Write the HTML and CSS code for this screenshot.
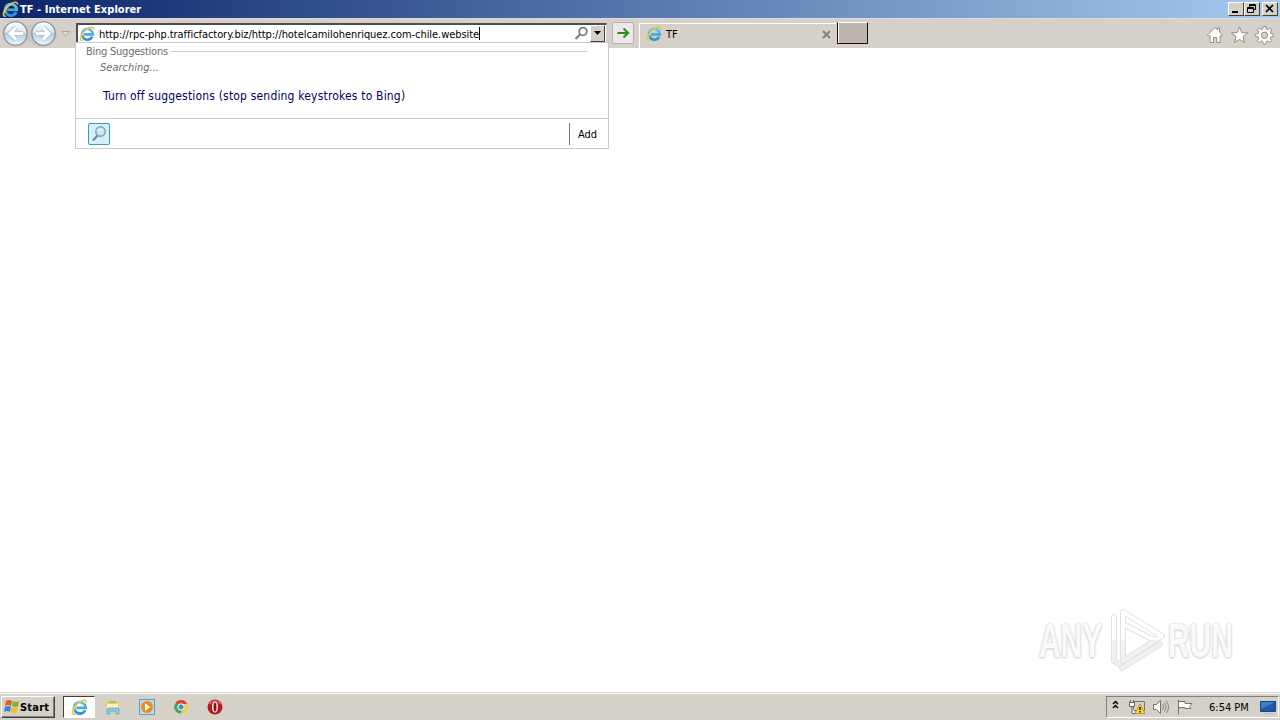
FILE: index.html
```html
<!DOCTYPE html>
<html lang="en">
<head>
  <meta charset="UTF-8" />
  <title>TF - Internet Explorer</title>
  <link rel="stylesheet" href="styles.css">
</head>
<body>

  <!-- shared icons -->
  <svg class="defs" width="0" height="0">
    <defs>
      <linearGradient id="blue" x1="0" y1="0" x2="0" y2="1">
        <stop offset="0" stop-color="#66c4f0" />
        <stop offset="1" stop-color="#2c90d5" />
      </linearGradient>
      <linearGradient id="glass" x1="0" y1="0" x2="0" y2="1">
        <stop offset="0" stop-color="#fafcfd" />
        <stop offset=".45" stop-color="#dce7ef" />
        <stop offset=".5" stop-color="#b4ccdd" />
        <stop offset="1" stop-color="#e6fbff" />
      </linearGradient>
      <linearGradient id="mark" x1="0" y1="0" x2="0" y2="1">
        <stop offset=".49" stop-color="#fff" />
        <stop offset=".51" stop-color="#f1f1f1" />
      </linearGradient>
      <symbol id="ie" viewBox="0 0 16 16">
        <path d="M13.300 10.600A5.400 5.400 0 1 1 13.800 8.300H5" fill="none" stroke="url(#blue)" stroke-width="2.700" />
        <path d="M3.600 14.300C-.4 15 .8 8.600 6.300 4.200c4.100-3.300 8.700-4.300 8.300-.7" fill="none" stroke="#e8c431" stroke-width="1.400" />
        <path d="M1.900 12.500C2 10 5 6 8.500 3.600" fill="none" stroke="#fff08a" stroke-width=".6" />
      </symbol>
    </defs>
  </svg>

  <header class="titlebar">
    <svg class="title-icon" width="17" height="17"><use href="#ie" /></svg>
    <span class="title-text">TF - Internet Explorer</span>
    <div class="window-buttons">
      <span class="win-btn"><svg width="14" height="12"><path d="M3 9h6" stroke="#000" stroke-width="2" /></svg></span>
      <span class="win-btn"><svg width="14" height="12"><path d="M4.500 4V1.500h6v5H9M4 2.500h7M2.500 4.500h6v5h-6zM2 5.500h7" fill="none" stroke="#000" /></svg></span>
      <span class="win-btn close"><svg width="14" height="12"><path d="M3 2l7 7M10 2L3 9" stroke="#000" stroke-width="1.7" /></svg></span>
    </div>
  </header>

  <nav class="toolbar">
    <svg class="history" width="74" height="30" viewBox="0 0 74 30">
      <path d="M2 14C3 1 19-1 25 5q4 3 8 0C41-1 56 2 57 15c0 14-17 16-25 9q-3-2-6 0C18 31 2 28 2 14z" fill="#c9c6c3" />
      <g fill="url(#glass)" stroke="#83888e" stroke-width="1.1">
        <circle cx="15.5" cy="14.5" r="11.7" />
        <circle cx="43.5" cy="14.5" r="11.7" />
      </g>
      <g fill="none" stroke="#8cabc1" stroke-width="4.6"><path d="M23 14.500H10M16 8.500l-6 6 6 6M36 14.500h13M43 8.500l6 6-6 6" /></g>
      <g fill="none" stroke="#fff" stroke-width="3.4"><path d="M23 14.500H10M16 8.500l-6 6 6 6M36 14.500h13M43 8.500l6 6-6 6" /></g>
      <path d="M61.5 12.500h8l-4 4.500z" fill="#e1ded9" stroke="#aaa6a0" />
    </svg>

    <div class="address">
      <svg class="address-icon" width="16" height="16"><use href="#ie" /></svg>
      <span class="url">http://rpc-php.trafficfactory.biz/http://hotelcamilohenriquez.com-chile.website</span>
      <span class="caret"></span>
      <svg class="find" width="15" height="15"><circle cx="9" cy="5.5" r="3.8" fill="none" stroke="#7b7b7b" stroke-width="1.8" /><path d="M6 8.5L1.5 13" stroke="#7b7b7b" stroke-width="2.2" /></svg>
      <span class="drop"><svg width="13" height="14"><path d="M3 5h7L6.500 9z" /></svg></span>
    </div>

    <span class="go"><svg width="20" height="20"><path d="M4.500 10h10M10.500 5.500l4.500 4.500-4.500 4.500" fill="none" stroke="#278b23" stroke-width="2.1" /></svg></span>

    <div class="tab">
      <svg width="16" height="16"><use href="#ie" /></svg>
      <span class="tab-name">TF</span>
      <svg class="tab-close" width="9" height="9"><path d="M1 1l7 7M8 1L1 8" stroke="#84807a" stroke-width="1.9" /></svg>
    </div>
    <span class="new-tab"></span>

    <svg class="tools" width="68" height="20" viewBox="0 0 68 20">
      <g fill="#fff" stroke="#8e8b87" stroke-width="1" stroke-linejoin="round">
        <path d="M1.500 10L9 2.500l2.500 2.300V3h2v4L16.500 10l-1.400 1.400-.9-.8V17.500h-3.500v-5H7.500v5H4v-7l-1 1z" />
        <path d="M33.500 2l2.200 5.600 6 .3-4.700 3.800 1.600 5.900-5.100-3.300-5.100 3.300 1.600-5.900-4.700-3.800 6-.3z" />
        <path d="M56.700 4l.5-2.500h2.600l.5 2.500 1.400.6 2.100-1.500 1.900 1.900-1.500 2.100.6 1.400 2.500.5v2.600l-2.500.5-.6 1.400 1.500 2.100-1.900 1.900-2.100-1.500-1.400.6-.5 2.500h-2.600l-.5-2.500-1.400-.6-2.100 1.500-1.900-1.900 1.500-2.100-.6-1.400-2.500-.5V9l2.500-.5.6-1.400L51.300 5l1.900-1.900 2.100 1.500z" />
        <circle cx="58.500" cy="10.300" r="3.200" fill="#d5d1cb" />
      </g>
    </svg>
  </nav>

  <main class="page">
    <!-- watermark -->
    <div class="watermark">
      <span class="mark-text">ANY</span>
      <svg width="62" height="66" viewBox="0 0 62 66">
        <g fill="none" stroke-linejoin="round" stroke-linecap="round">
          <path class="mark-shade" d="M9 10v44l5 3M18 54V5l39 24-39 25M18 17l31 16M17 61l38-24" />
          <path class="mark-line" d="M9 10v44l5 3M18 54V5l39 24-39 25M18 17l31 16M17 61l38-24" />
        </g>
      </svg>
      <span class="mark-text run">RUN</span>
    </div>
  </main>

  <!-- address bar suggestions -->
  <section class="suggestions">
    <div class="group"><span>Bing Suggestions</span></div>
    <div class="searching">Searching...</div>
    <div class="turn-off">Turn off suggestions (stop sending keystrokes to Bing)</div>
    <div class="providers">
      <span class="provider"><svg width="20" height="20"><path d="M8.500 11.500L4 16.500" stroke="#7d858d" stroke-width="2" /><circle cx="11.500" cy="7.500" r="4.700" fill="#c4e7fa" stroke="#8799ab" stroke-width="1.400" /><path d="M9 7q1-3 4-2" fill="none" stroke="#fff" /></svg></span>
      <span class="add">Add</span>
    </div>
  </section>

  <footer class="taskbar">
    <div class="start">
      <svg width="17" height="16" viewBox="0 0 17 16">
        <path d="M3 2q3-2 6 0L8 7Q5 5 2 7z" fill="#e9572b" />
        <path d="M10 2q3 2 6 0l-1 5q-3 2-6 0z" fill="#79b72c" />
        <path d="M2 8q3-2 6 0l-1 5q-3-2-6 0z" fill="#3984cf" />
        <path d="M9 8q3 2 6 0l-1 5q-3 2-6 0z" fill="#f7bd23" />
      </svg>
      <span>Start</span>
    </div>
    <div class="task active"><svg width="17" height="17"><use href="#ie" /></svg></div>
    <div class="task">
      <svg width="16" height="16"><path d="M1 2h5l1 1h7v11H1z" fill="#ebcf6b" /><path d="M2 5h11v4H2z" fill="#fff4b9" /><path d="M4 3h7" stroke="#63ad58" /><path d="M2 15v-4q0-2 2-2h8q2 0 2 2v4h-3v-3H5v3z" fill="#8bcdf0" stroke="#4b9dcb" stroke-width=".7" /></svg>
    </div>
    <div class="task">
      <svg width="17" height="17"><path d="M.5.5h15v15H.5z" fill="#b9dbf0" stroke="#5998cb" /><circle cx="8" cy="8" r="6" fill="#f18a17" /><path d="M6 4.300L11.500 8 6 11.700z" fill="#fff" /></svg>
    </div>
    <div class="task">
      <svg width="16" height="16"><path d="M8 8L2.400 4.300A6.500 6.500 0 0 1 14 5H8z" fill="#da4437" /><path d="M8 8L2.400 4.300A6.500 6.500 0 0 0 7.500 14.500l3-5z" fill="#42a55a" /><path d="M8 5h6a6.500 6.500 0 0 1-6.500 9.500L11 8z" fill="#f5ce3e" /><circle cx="8" cy="8" r="3.200" fill="#4c87df" stroke="#fff" stroke-width="1" /></svg>
    </div>
    <div class="task">
      <svg width="16" height="16"><circle cx="8" cy="8" r="7.500" fill="#b9181d" /><path d="M2 5q6-6 12 0" fill="none" stroke="#df6761" stroke-width="1.500" /><ellipse cx="8" cy="8" rx="3" ry="5.500" fill="#fff" /><ellipse cx="8" cy="8" rx="1.500" ry="4.600" fill="#8c1114" /></svg>
    </div>
    <div class="tray">
      <svg width="92" height="18" viewBox="0 0 92 18">
        <path d="M6 6l2.500-2.500L11 6M6 10l2.500-2.500L11 10" fill="none" stroke="#000" stroke-width="1.500" />
        <path d="M26.500 3.500h11v9h-11z" fill="#d5d2cd" stroke="#77736f" />
        <path d="M22.500 4.500h5v4h-5zM23.500 2v2.500M26.500 2v2.500M25 8.500v7h3" fill="#fff" stroke="#65625f" />
        <path d="M33 6l5 9.500H28z" fill="#ffd82e" stroke="#b99a20" /><path d="M33 9v3M33 13v1.500" stroke="#000" stroke-width="1.300" />
        <path d="M46.500 6.500h3l4-4v13l-4-4h-3z" fill="#fff" stroke="#74716e" />
        <path d="M55.500 6q2 3 0 6M57.500 4.500q3 4.500 0 9M59.500 3q4 6 0 12" fill="none" stroke="#8b8885" />
        <path d="M71.500 2v14M72 3.500h6v2h7l-2.500 3 1.500 2h-6v-1h-6" fill="#fff" stroke="#74716e" />
      </svg>
      <span class="clock">6:54 PM</span>
      <svg class="desktop" width="16" height="16"><path d="M.5 1.500h15v10H.5z" fill="#215aa4" stroke="#164784" /><path d="M1 2h14L1 9z" fill="#3c7fce" /><path d="M4 13.500h9" stroke="#abc0d2" /></svg>
    </div>
  </footer>

</body>
</html>
```
FILE: styles.css
```css
* {
  box-sizing: border-box;
}

body {
  margin: 0;
  width: 1280px;
  height: 720px;
  display: flex;
  flex-direction: column;
  position: relative;
  overflow: hidden;
  background: #fff;
  color: #000;
  font-family: "DejaVu Sans Condensed", "DejaVu Sans", sans-serif;
  font-size: 11px;
}

svg {
  display: block;
  flex: none;
}

.defs {
  position: absolute;
}

/* title bar */
.titlebar {
  height: 18px;
  display: flex;
  align-items: center;
  padding: 0 2px;
  background: linear-gradient(90deg, #0a246a, #a6caf0);
}

.title-text {
  margin-left: 1px;
  color: #fff;
  font-weight: bold;
  letter-spacing: 0.04px;
  white-space: nowrap;
}

.window-buttons {
  display: flex;
  margin-left: auto;
}

.win-btn {
  width: 16px;
  height: 14px;
  background: #d4d0c8;
  border: 1px solid;
  border-color: #fff #404040 #404040 #fff;
}

.close {
  margin-left: 2px;
}

/* toolbar */
.toolbar {
  height: 30px;
  display: flex;
  align-items: flex-start;
  background: #d5d0c8;
  border-top: 1px solid #dedbd6;
}

.address {
  display: flex;
  align-items: center;
  width: 531px;
  height: 20px;
  margin: 4px 0 0 2px;
  padding: 0 1px 0 1px;
  background: #fff;
  border: 1px solid #d4d0c8;
  border-top: 2px solid #514b51;
  border-left: 2px solid #514b51;
}

.url {
  margin: 1px 0 0 4px;
  letter-spacing: -0.06px;
  white-space: nowrap;
}

.caret {
  width: 1px;
  height: 13px;
  background: #000;
}

.find {
  margin-left: auto;
}

.drop {
  width: 15px;
  height: 17px;
  margin-left: 1px;
  background: #d4d0c8;
  border: 1px solid;
  border-color: #fff #404040 #404040 #fff;
}

.go {
  width: 22px;
  height: 22px;
  margin: 3px 0 0 5px;
  background: #ebe8e7;
  border: 1px solid #b5b0b3;
  border-radius: 2px;
}

.tab {
  display: flex;
  align-items: center;
  width: 197px;
  height: 25px;
  margin: 4px 0 0 5px;
  padding: 0 5px 4px 6px;
  border-top: 1px solid #fff;
  border-left: 1px solid #fff;
}

.tab-name {
  margin-left: 4px;
}

.tab-close {
  margin-left: auto;
}

.new-tab {
  width: 31px;
  height: 22px;
  margin: 3px 0 0 1px;
  background: #bdb5ae;
  border: 1px solid #111;
  border-top-color: #fff;
  box-shadow: inset 1px 0 #fff;
}

.tools {
  margin: 6px 6px 0 auto;
}

/* page */
.page {
  flex: 1;
  display: flex;
  align-items: flex-end;
  justify-content: flex-end;
  padding: 0 47px 19px 0;
}

.watermark {
  display: flex;
  align-items: center;
}

.mark-text {
  width: 66px;
  color: #fafafa;
  font-family: "Liberation Sans Narrow", "Liberation Sans", sans-serif;
  font-size: 49px;
  font-weight: bold;
  line-height: 66px;
  text-shadow: 0 0 3px #ccc, 0 1px 3px #ccc;
  transform: scaleX(.61);
  transform-origin: left;
}

.run {
  transform: translateX(1px) scaleX(.61);
}

.mark-shade {
  stroke: #e2e2e2;
  stroke-width: 6;
}

.mark-line {
  stroke: url(#mark);
  stroke-width: 4;
}

/* suggestions */
.suggestions {
  position: absolute;
  top: 42px;
  left: 75px;
  width: 534px;
  height: 107px;
  background: #fff;
  border: 1px solid #c9c9c9;
}

.group {
  display: flex;
  align-items: center;
  height: 15px;
  padding: 1px 20px 0 10px;
  color: #6d6d6d;
  letter-spacing: -0.24px;
}

.group::after {
  content: "";
  flex: 1;
  height: 1px;
  margin-left: 3px;
  background: #ccc;
}

.searching {
  height: 17px;
  padding-left: 24px;
  color: #6d6d6d;
  font-style: italic;
  line-height: 19px;
}

.turn-off {
  height: 43px;
  padding: 13px 0 0 27px;
  color: #000066;
  font-size: 12px;
  letter-spacing: 0.18px;
  line-height: 17px;
}

.providers {
  display: flex;
  align-items: center;
  height: 30px;
  padding-left: 12px;
  border-top: 1px solid #c9c9c9;
}

.provider {
  width: 22px;
  height: 22px;
  background: #d3effc;
  border: 1px solid #3c9abb;
  border-radius: 2px;
}

.add {
  width: 39px;
  height: 22px;
  margin-left: auto;
  padding-left: 8px;
  border-left: 1px solid #777;
  line-height: 23px;
}

/* taskbar */
.taskbar {
  display: flex;
  align-items: flex-start;
  height: 28px;
  padding: 3px 1px 0 1px;
  background: #d5d0c8;
  border-top: 1px solid #d4d0c8;
  box-shadow: inset 0 1px #fff;
}

.start {
  display: flex;
  align-items: center;
  width: 54px;
  height: 22px;
  padding-left: 1px;
  border: 1px solid;
  border-color: #fff #404040 #404040 #fff;
  box-shadow: inset -1px -1px #808080;
  font-weight: bold;
  letter-spacing: 0.2px;
}

.start + .task {
  margin-left: 8px;
}

.task {
  display: flex;
  align-items: center;
  justify-content: center;
  width: 32px;
  height: 22px;
  margin-right: 2px;
}

.active {
  background: #fff;
  border: 1px solid;
  border-color: #404040 #fff #fff #404040;
}

.tray {
  display: flex;
  align-items: center;
  width: 173px;
  height: 22px;
  margin-left: auto;
  border: 1px solid;
  border-color: #808080 #fff #fff #808080;
}

.clock {
  margin-left: 10px;
  letter-spacing: 0;
  white-space: nowrap;
}

.desktop {
  margin: 2px 2px 0 auto;
}
```
